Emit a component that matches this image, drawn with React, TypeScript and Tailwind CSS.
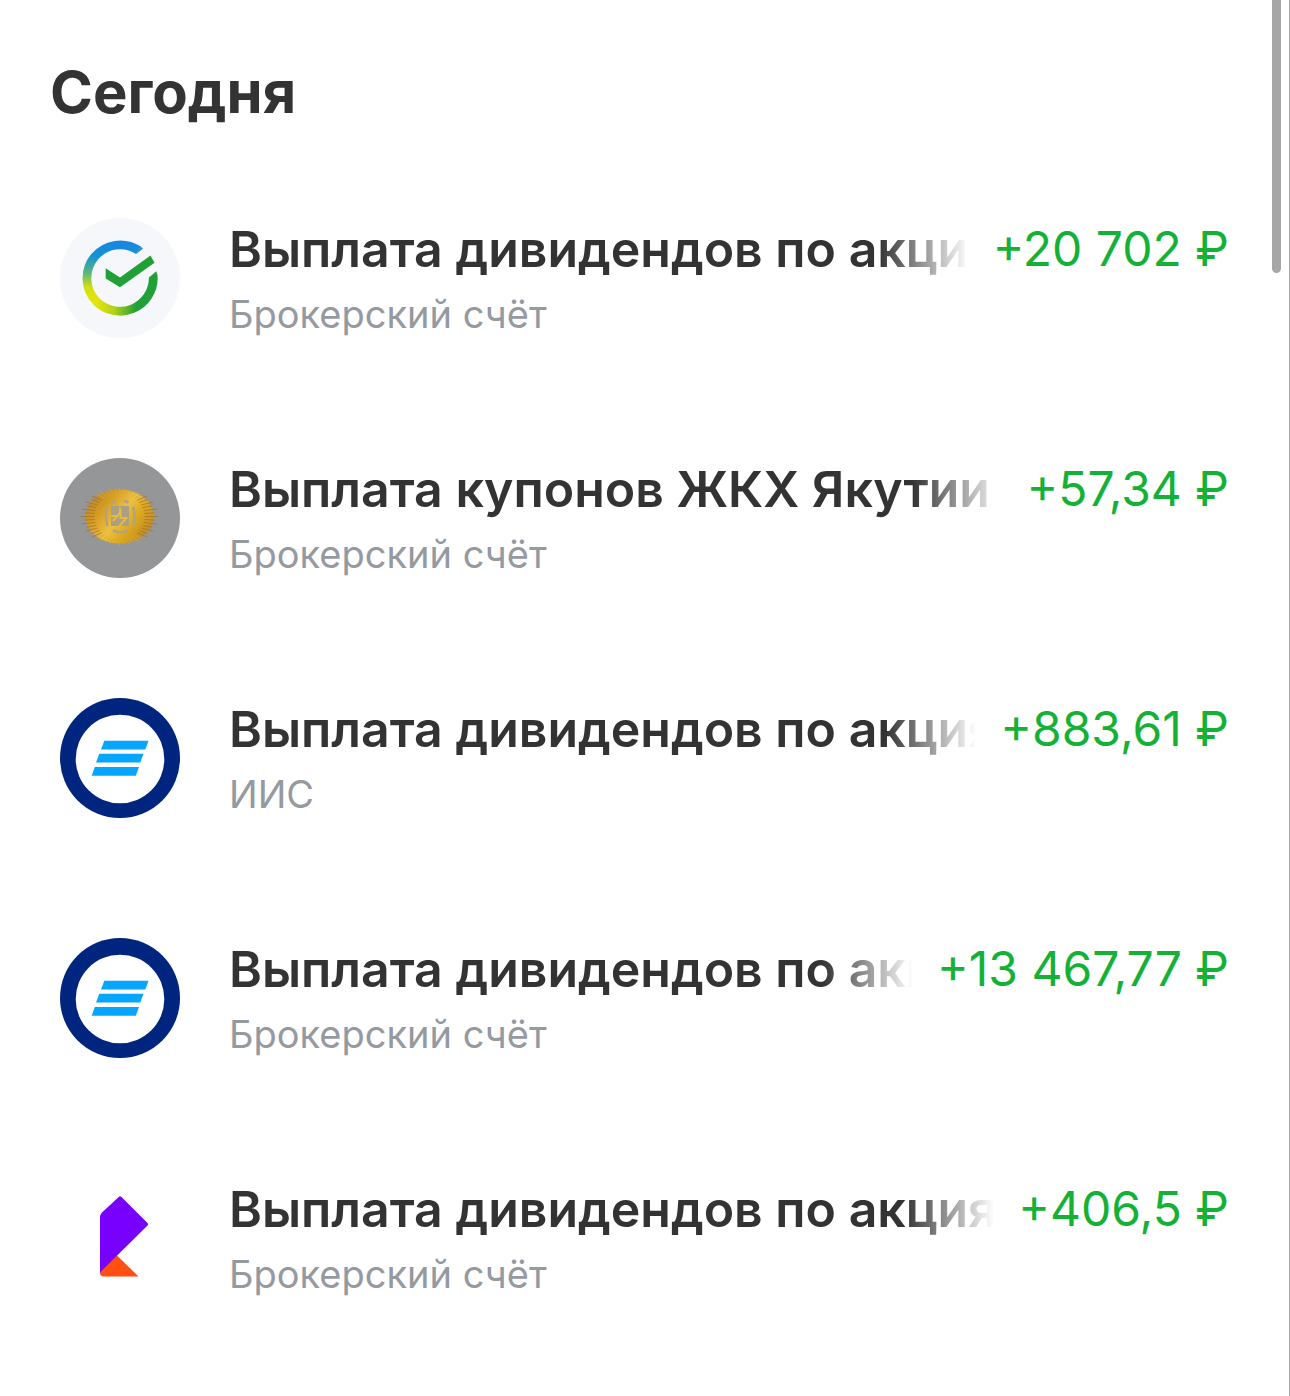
import type { ComponentType } from "react";

function SberLogo() {
    return (
        <svg viewBox="0 0 120 120" className="size-full" aria-hidden="true">
            <defs>
                <linearGradient id="sber-left" x1="0" y1="0" x2="0" y2="1">
                    <stop offset="0" stopColor="#1788e0" />
                    <stop offset="0.2" stopColor="#1593d0" />
                    <stop offset="0.5" stopColor="#5cb878" />
                    <stop offset="0.75" stopColor="#d4df0e" />
                    <stop offset="1" stopColor="#e2e50a" />
                </linearGradient>
                <linearGradient id="sber-bottom" x1="0" y1="0" x2="1" y2="0">
                    <stop offset="0" stopColor="#e2e50a" />
                    <stop offset="0.3" stopColor="#b5d315" />
                    <stop offset="0.7" stopColor="#21a038" />
                </linearGradient>
            </defs>
            <circle cx="60" cy="60" r="60" fill="#f5f7fa" />
            <path d="M78.500 32.300A33.300 33.300 0 0 0 36.500 83.500" fill="none" stroke="url(#sber-left)" strokeWidth="8.800" />
            <path d="M36.300 83.300A33.300 33.300 0 0 0 93.300 60" fill="none" stroke="url(#sber-bottom)" strokeWidth="8.800" />
            <path d="M88.900 60.300V59.500L96.300 53.300Q97.600 56.500 97.700 60.300Z" fill="#21a038" />
            <path d="M75.900 36.200 80.900 28.600 82.800 30.700Z" fill="#1889dc" />
            <path d="M45.700 50.300 60 59.500 90.500 37.500 94.500 44.700 60 69.300 45.700 60.500Z" fill="#21a038" />
        </svg>
    );
}

function CoinLogo() {
    const rays = Array.from({ length: 48 }, (_, i) => (i * Math.PI * 2) / 48);

    return (
        <svg viewBox="0 0 120 120" className="size-full" aria-hidden="true">
            <defs>
                <linearGradient id="coin-gold" x1="0" y1="0.2" x2="1" y2="0.8">
                    <stop offset="0" stopColor="#b98430" />
                    <stop offset="0.25" stopColor="#d59c22" />
                    <stop offset="0.5" stopColor="#ecc044" />
                    <stop offset="0.7" stopColor="#dba81f" />
                    <stop offset="1" stopColor="#b98426" />
                </linearGradient>
            </defs>
            <circle cx="60" cy="60" r="60" fill="#949698" />
            <ellipse cx="59.500" cy="58.500" rx="34" ry="27" fill="url(#coin-gold)" />
            {rays.map((a, i) => (
                <line
                    key={i}
                    x1={59.5 + Math.cos(a) * 25}
                    y1={58.5 + Math.sin(a) * 23}
                    x2={59.5 + Math.cos(a) * (i % 2 ? 35 : 39)}
                    y2={58.5 + Math.sin(a) * (i % 2 ? 28 : 29)}
                    stroke={Math.abs(Math.cos(a)) > 0.7 ? "#a87426" : "#dba726"}
                    strokeWidth="0.800"
                />
            ))}
            <path
                d="M47.500 49Q44.500 58 47.500 68M73 49Q76 58 73 68M52 44.500 56 42.500M64 42.500 68.500 44.500M53 72.500Q60.500 76.500 67.500 72.500"
                fill="none"
                stroke="#b3a47c"
                strokeWidth="2.600"
            />
            <rect x="51" y="48" width="18" height="20" fill="#aaa086" />
            <path d="M53 63 60.500 54V60H66.500L58.500 69M60 54V49.500M51 58H56" fill="none" stroke="#e8ba3c" strokeWidth="2" />
        </svg>
    );
}

function StripesLogo() {
    return (
        <svg viewBox="0 0 120 120" className="size-full" aria-hidden="true">
            <circle cx="60" cy="60" r="60" fill="#00257f" />
            <circle cx="60" cy="61" r="44.300" fill="#fff" />
            <path d="M44.300 42.700H88.500L85.300 51.500H41ZM39.300 55.700H83.500L80.300 64.500H36ZM34.800 69H79L75.800 77.700H31.700Z" fill="#06a5fe" />
        </svg>
    );
}

function RostelecomLogo() {
    return (
        <svg viewBox="0 0 120 120" className="size-full" aria-hidden="true">
            <path d="M40 92 57 77.500 78.500 98.500H44Q40 98.500 40 94.500Z" fill="#ff4f12" />
            <path d="M59 18.800Q60 17.500 61.200 18.800L87.500 44.900Q88.800 46.200 87.500 47.500L41.500 93Q40 94.500 40 96V39.500Q40 36.500 42 34.500Z" fill="#7700ff" />
        </svg>
    );
}

interface Operation {
    title: string;
    account: string;
    amount: string;
    logo: ComponentType;
}

const operations: Operation[] = [
    { title: "Выплата дивидендов по акциям", account: "Брокерский счёт", amount: "+20 702 ₽", logo: SberLogo },
    { title: "Выплата купонов ЖКХ Якутии БО", account: "Брокерский счёт", amount: "+57,34 ₽", logo: CoinLogo },
    { title: "Выплата дивидендов по акциям", account: "ИИС", amount: "+883,61 ₽", logo: StripesLogo },
    { title: "Выплата дивидендов по акциям", account: "Брокерский счёт", amount: "+13 467,77 ₽", logo: StripesLogo },
    { title: "Выплата дивидендов по акциям", account: "Брокерский счёт", amount: "+406,5 ₽", logo: RostelecomLogo },
];

export default function App() {
    return (
        <main className="relative min-h-screen border-r border-[#a8a8a8] bg-white pt-[60px] font-['Inter',sans-serif] text-[#333333]">
            <h1 className="mb-[34px] px-[50px] text-[58px] leading-[64px] font-bold">Сегодня</h1>

            <ul>
                {operations.map((op, index) => (
                    <li key={index} className="flex items-start gap-[49px] px-[60px] pt-[60px] pb-[58px]">
                        <div className="size-[120px] shrink-0">
                            <op.logo />
                        </div>
                        <div className="min-w-0 flex-1">
                            <div className="flex gap-6 leading-[62px] whitespace-nowrap">
                                <h2 className="min-w-0 flex-1 overflow-hidden mask-r-from-[calc(100%-90px)] mask-r-to-100% text-[50px] font-semibold">
                                    {op.title}
                                </h2>
                                <span className="text-[48px] text-[#14b137]">{op.amount}</span>
                            </div>
                            <p className="mt-2 text-[38px] leading-[52px] text-[#9599a0]">{op.account}</p>
                        </div>
                    </li>
                ))}
            </ul>

            <div className="absolute top-0 right-2 h-[273px] w-[9px] rounded-b-full bg-[#a6a6a6]" />
        </main>
    );
}
